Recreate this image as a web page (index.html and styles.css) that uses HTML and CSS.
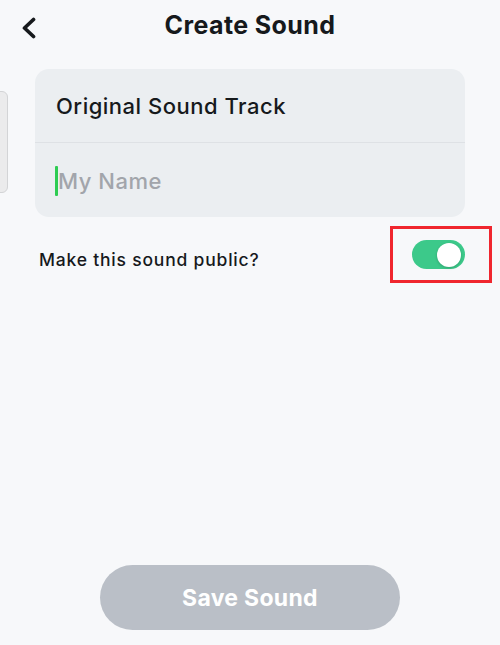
FILE: index.html
```html
<!DOCTYPE html>
<html>
<head>
<meta charset="utf-8">
<link rel="stylesheet" href="styles.css">
</head>
<body>
<div class="screen">
  <header class="header">
    <button class="back" aria-label="Back">
      <svg width="17" height="22" viewBox="0 0 17 22"><path d="M13.5 2.5 L4.5 11 L13.5 19.5" fill="none" stroke="#16191c" stroke-width="3.7" stroke-linecap="round" stroke-linejoin="round"/></svg>
    </button>
    <h1 class="title">Create Sound</h1>
  </header>
  <div class="content">
    <div class="side-peek"></div>
    <div class="card">
      <div class="row track">Original Sound Track</div>
      <div class="row name"><span class="cursor"></span><span class="placeholder">My Name</span></div>
    </div>
  </div>
  <div class="public">
    <span class="public-label">Make this sound public?</span>
    <div class="highlight">
      <div class="toggle"><div class="knob"></div></div>
    </div>
  </div>
  <div class="spacer"></div>
  <div class="footer">
    <button class="save">Save Sound</button>
  </div>
</div>
</body>
</html>
```
FILE: styles.css
```css
* { box-sizing: border-box; }
html, body { margin: 0; padding: 0; }
body {
  width: 500px;
  height: 645px;
  background: #f7f8fa;
  font-family: Inter, Lato, sans-serif;
  color: #16191c;
  overflow: hidden;
}
.screen {
  height: 645px;
  display: flex;
  flex-direction: column;
}
.header {
  position: relative;
  height: 52px;
  display: flex;
  align-items: center;
  justify-content: center;
}
.back {
  position: absolute;
  left: 20px;
  top: 17px;
  padding: 0;
  border: 0;
  background: none;
  width: 17px;
  height: 22px;
}
.back svg { display: block; }
.title {
  margin: 0 0 2px 0;
  font-size: 25px;
  font-weight: 700;
  letter-spacing: 0.4px;
}
.content {
  position: relative;
  padding: 17px 35px 0 35px;
}
.side-peek {
  position: absolute;
  left: -6px;
  top: 39px;
  width: 14px;
  height: 102px;
  background: #ebebec;
  border: 1px solid #d3d4d6;
  border-radius: 6px;
}
.card {
  background: #ebeef1;
  border-radius: 14px;
  height: 148px;
  display: flex;
  flex-direction: column;
}
.row {
  height: 74px;
  display: flex;
  align-items: center;
  padding-left: 21px;
  font-size: 22px;
  letter-spacing: 0.5px;
}
.track {
  font-weight: 500;
  border-bottom: 1px solid #dee1e5;
}
.name {
  padding-left: 20px;
  padding-top: 2px;
}
.cursor {
  width: 3px;
  height: 30px;
  background: #2ecc52;
  border-radius: 1px;
}
.placeholder {
  color: #a2a5ab;
  font-weight: 500;
}
.public {
  display: flex;
  align-items: center;
  justify-content: space-between;
  padding: 9px 8px 0 39px;
}
.public-label {
  font-size: 17.5px;
  font-weight: 500;
  letter-spacing: 0.8px;
  padding-top: 9px;
}
.highlight {
  width: 102px;
  height: 57px;
  border: 3px solid #f0262e;
  display: flex;
  align-items: center;
  padding-left: 19px;
}
.toggle {
  width: 53px;
  height: 29px;
  border-radius: 15px;
  background: #3cc98a;
  position: relative;
}
.knob {
  position: absolute;
  right: 4px;
  top: 2.5px;
  width: 24px;
  height: 24px;
  border-radius: 50%;
  background: #ffffff;
  box-shadow: 0 1px 3px rgba(0,0,0,0.2);
}
.spacer { flex: 1; }
.footer {
  display: flex;
  justify-content: center;
  padding-bottom: 15px;
}
.save {
  width: 300px;
  height: 65px;
  border: 0;
  border-radius: 33px;
  background: #babfc7;
  color: #ffffff;
  font-family: Inter, Lato, sans-serif;
  font-size: 23px;
  font-weight: 700;
  letter-spacing: 0.3px;
}
```
